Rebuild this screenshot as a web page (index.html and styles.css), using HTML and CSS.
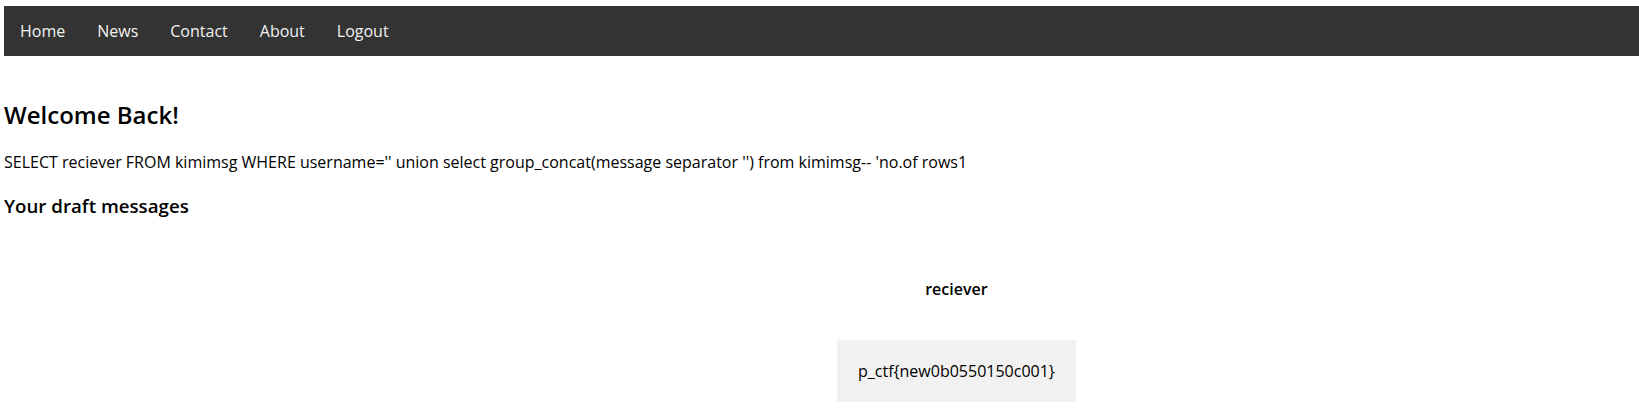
FILE: index.html
```html
<!DOCTYPE html>
<html lang="en">
<head>
<meta charset="utf-8">
<title>Welcome Back</title>
<link rel="stylesheet" href="styles.css">
</head>
<body>
<nav class="topnav">
  <a href="#">Home</a>
  <a href="#">News</a>
  <a href="#">Contact</a>
  <a href="#">About</a>
  <a href="#">Logout</a>
</nav>
<main class="content">
  <h2 class="welcome">Welcome Back!</h2>
  <p class="query">SELECT reciever FROM kimimsg WHERE username='' union select group_concat(message separator '') from kimimsg-- 'no.of rows1</p>
  <h3 class="drafts-title">Your draft messages</h3>
  <table class="drafts">
    <thead>
      <tr><th>reciever</th></tr>
    </thead>
    <tbody>
      <tr><td>p_ctf{new0b0550150c001}</td></tr>
    </tbody>
  </table>
</main>
</body>
</html>
```
FILE: styles.css
```css
html, body {
  margin: 0;
  padding: 0;
  background: #fff;
}

body {
  font-family: "Open Sans", "Noto Sans", sans-serif;
  font-size: 16px;
  color: #000;
}

.topnav {
  display: flex;
  margin: 6px 0 0 4px;
  background: #333;
}

.topnav a {
  display: block;
  padding: 14px 16px;
  color: #f2f2f2;
  font-size: 16px;
  line-height: 22px;
  text-decoration: none;
}

.content {
  padding: 0 4px;
}

.welcome {
  margin: 42px 0 20px;
  font-size: 24px;
  font-weight: 600;
}

.query {
  margin: 0 0 20px;
  font-size: 16px;
}

.drafts-title {
  margin: 0 0 19px;
  font-size: 18.72px;
  font-weight: 600;
}

.drafts {
  margin-left: 833px;
  border-collapse: separate;
  border-spacing: 0 20px;
}

.drafts th {
  padding: 21px 20px 20px;
  font-size: 16px;
  font-weight: 600;
  text-align: center;
}

.drafts td {
  padding: 20px 21px;
  background: #f1f1f1;
  font-size: 16px;
  text-align: center;
}
```
